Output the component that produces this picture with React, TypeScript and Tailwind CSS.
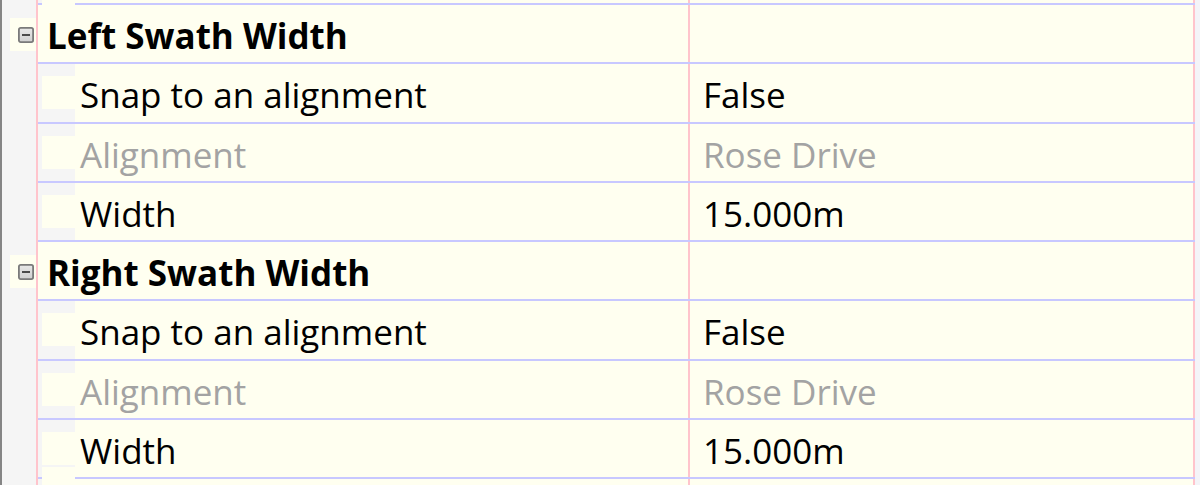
import React from 'react'

type Row =
  | { kind: 'cat'; label: string }
  | { kind: 'prop'; label: string; value: string; disabled?: boolean }

const rows: Row[] = [
  { kind: 'cat', label: 'Left Swath Width' },
  { kind: 'prop', label: 'Snap to an alignment', value: 'False' },
  { kind: 'prop', label: 'Alignment', value: 'Rose Drive', disabled: true },
  { kind: 'prop', label: 'Width', value: '15.000m' },
  { kind: 'cat', label: 'Right Swath Width' },
  { kind: 'prop', label: 'Snap to an alignment', value: 'False' },
  { kind: 'prop', label: 'Alignment', value: 'Rose Drive', disabled: true },
  { kind: 'prop', label: 'Width', value: '15.000m' },
]

function CollapseIcon() {
  return (
    <svg width="16" height="16" viewBox="0 0 16 16">
      <defs>
        <linearGradient id="btn" x1="0" y1="0" x2="0" y2="1">
          <stop offset="0" stopColor="#e8e8e8" />
          <stop offset="1" stopColor="#d0d0d0" />
        </linearGradient>
      </defs>
      <rect x="0.9" y="0.9" width="14.2" height="14.2" rx="1.8" fill="url(#btn)" stroke="#7a7a7a" strokeWidth="1.8" />
      <rect x="4" y="7" width="8" height="2" fill="#4a4a4a" />
    </svg>
  )
}

function Indent() {
  return (
    <div className="flex h-full w-[37px] shrink-0 items-center bg-[#f5f5f5] pl-[4px]">
      <div className="h-[33px] w-full bg-[#fffff0]" />
    </div>
  )
}

function GridRow({ row, className = 'h-[59.25px]' }: { row: Row | null; className?: string }) {
  const isCat = row?.kind === 'cat'
  return (
    <div className={`flex shrink-0 ${className}`}>
      <div className="flex w-[34px] shrink-0 items-center bg-[#f5f5f5]">
        {isCat && (
          <div className="ml-[8px] flex h-[33px] w-[26px] items-center bg-[#fffff0] pl-[8px]">
            <CollapseIcon />
          </div>
        )}
      </div>
      <div className="w-[2px] shrink-0 bg-[#ffc4cc]" />
      <div className="flex flex-1 border-b-2 border-[#c8c8ff] bg-[#fffff0]">
        <div className="flex w-[650px] shrink-0 items-center">
          {row && row.kind === 'prop' && <Indent />}
          {row && row.kind === 'prop' && (
            <span className={`pl-[5px] pt-[4px] ${row.disabled ? 'text-[#a3a3a3]' : 'text-black'}`}>{row.label}</span>
          )}
          {row && row.kind === 'cat' && <span className="pl-[9px] pt-[4px] font-bold text-black">{row.label}</span>}
          {!row && <Indent />}
        </div>
        <div className="w-[2px] shrink-0 bg-[#ffc4cc]" />
        <div className="flex flex-1 items-center pl-[13px]">
          {row && row.kind === 'prop' && (
            <span className={`pt-[4px] ${row.disabled ? 'text-[#a3a3a3]' : 'text-black'}`}>{row.value}</span>
          )}
        </div>
        <div className="w-[2px] shrink-0 bg-[#ffc4cc]" />
      </div>
      <div className="w-[5px] shrink-0 bg-[#f4f4f8]" />
    </div>
  )
}

export default function App() {
  return (
    <div className="flex h-[485px] w-[1200px] overflow-hidden bg-[#f5f5f5] font-['Open_Sans','Noto_Sans',sans-serif] text-[35px] leading-none">
      <div className="w-[2px] shrink-0 bg-[#858585]" />
      <div className="flex flex-1 flex-col">
        <GridRow row={null} className="h-[5px]" />
        {rows.map((r, i) => (
          <GridRow key={i} row={r} />
        ))}
        <GridRow row={null} className="h-[10px]" />
      </div>
    </div>
  )
}
